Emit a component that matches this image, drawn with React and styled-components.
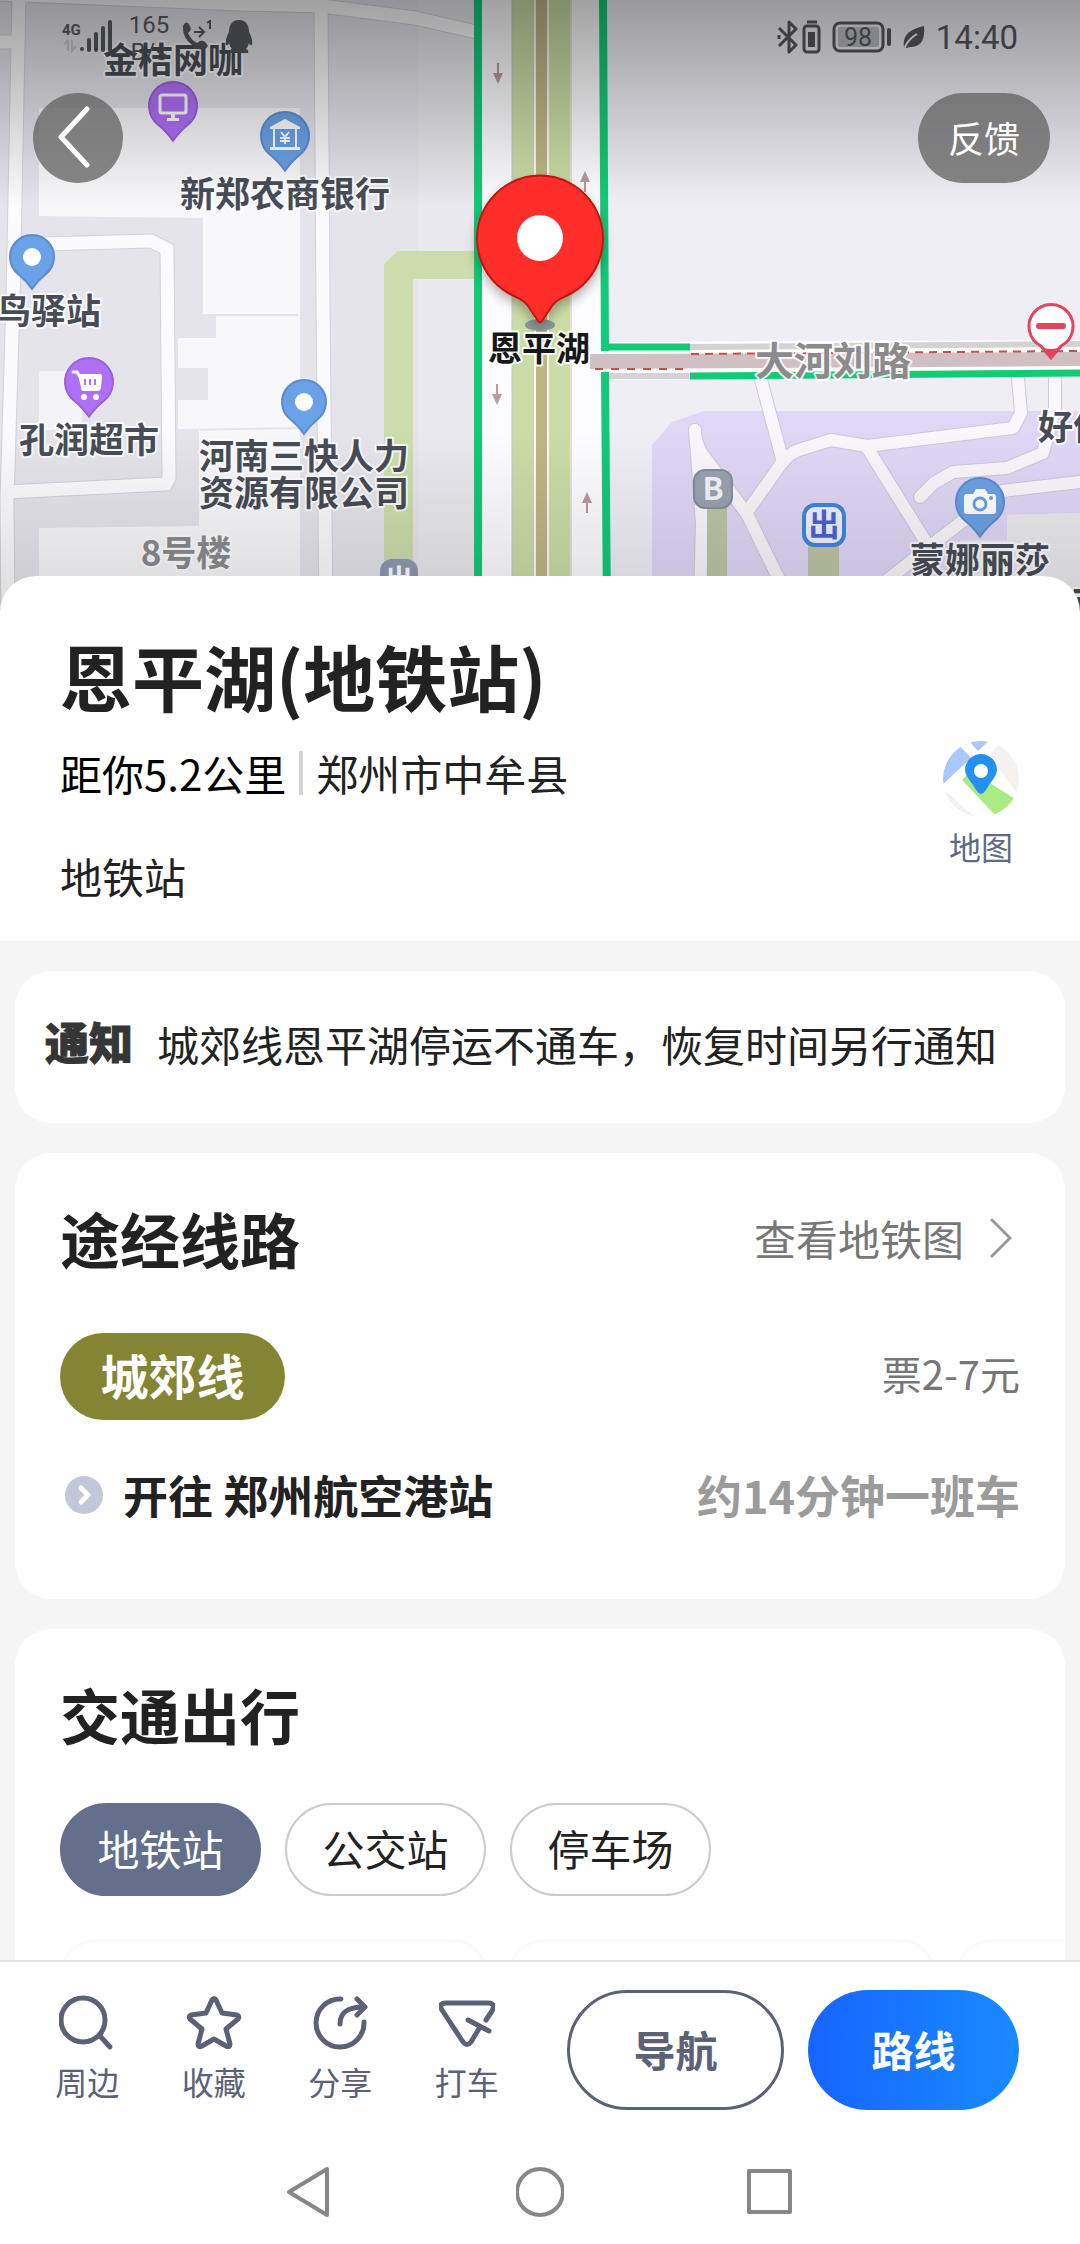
import React, { useState } from 'react';
import styled, { createGlobalStyle, css } from 'styled-components';

const COLOR = {
  TEXT: '#222222',
  SUB: '#777777',
  MUTED: '#9b9b9b',
  SLATE: '#5b6275',
  TAB: '#64708b',
  LINE: '#848533',
  PAGE: '#f5f5f5',
  BORDER: '#cccccc',
};

const FONT_SIZE = {
  SMALL: '32px',
  NORMAL: '40px',
  MEDIUM: '42px',
  LARGE: '45px',
  XLARGE: '60px',
  XXLARGE: '72px',
};

const FONT = "'Noto Sans CJK SC', sans-serif";

const GlobalStyle = createGlobalStyle`
  * { box-sizing: border-box; }
  body { margin: 0; background: #fff; font-family: ${FONT}; color: ${COLOR.TEXT}; }
  button { margin: 0; padding: 0; border: 0; background: none; font-family: inherit; color: inherit; cursor: pointer; }
  h1, h2, p { margin: 0; }
  svg { display: block; }
`;

const Page = styled.div`
  height: 100vh;
  display: flex;
  flex-direction: column;
  overflow: hidden;
`;

const Content = styled.main`
  flex: 1;
  min-height: 0;
  overflow-y: auto;
  scrollbar-width: none;
  background: ${COLOR.PAGE};
`;

/* map */

const MapArea = styled.section`
  position: relative;
  height: 612px;
  background: #e3e2e9;
`;

const MapSvg = styled.svg`
  width: 100%;
  height: 100%;
`;

const MapText = styled.text`
  font-family: ${FONT};
  font-size: ${({ $size }) => $size || 35}px;
  font-weight: 700;
  text-anchor: ${({ $anchor }) => $anchor || 'middle'};
  fill: ${({ $color }) => $color || '#484c56'};
  stroke: rgba(255, 255, 255, 0.85);
  stroke-width: 4px;
  stroke-linejoin: round;
  paint-order: stroke;
`;

const BadgeText = styled.text`
  font-family: ${FONT};
  font-size: ${({ $size }) => $size}px;
  font-weight: 700;
  text-anchor: middle;
  fill: ${({ $color }) => $color};
`;

const MapOverlay = styled.div`
  position: absolute;
  top: 0;
  left: 0;
  right: 0;
`;

const StatusBar = styled.div`
  height: 72px;
  padding: 12px 62px 0 61px;
  display: flex;
  justify-content: space-between;
  align-items: flex-start;
  color: #3d3e42;
`;

const StatusGroup = styled.div`
  display: flex;
  align-items: flex-start;
  gap: ${({ $gap }) => $gap}px;
  padding-top: ${({ $top }) => $top || 0}px;
`;

const Speed = styled.div`
  width: 42px;
  margin: 0 12px 0 14px;
  font-family: Roboto, sans-serif;
  font-size: 24px;
  line-height: 27px;
  text-align: center;
`;

const Clock = styled.time`
  font-family: Roboto, sans-serif;
  font-size: 33px;
  line-height: 36px;
`;

const MapButtons = styled.div`
  padding: 21px 30px 0 33px;
  display: flex;
  justify-content: space-between;
`;

const RoundButton = styled.button`
  width: ${({ $width }) => $width}px;
  height: 90px;
  border-radius: 45px;
  display: flex;
  justify-content: center;
  align-items: center;
  padding-bottom: 3px;
  background: rgba(96, 96, 96, 0.75);
  color: #fff;
  font-size: 36px;
`;

/* place summary */

const Summary = styled.section`
  position: relative;
  margin-top: -36px;
  padding: 49px 61px 35px 60px;
  display: flex;
  justify-content: space-between;
  border-radius: 36px 36px 0 0;
  background: #fff;
`;

const PlaceName = styled.h1`
  font-size: ${FONT_SIZE.XXLARGE};
  line-height: 100px;
  font-weight: 700;
`;

const PlaceMeta = styled.div`
  margin-top: 18px;
  display: flex;
  align-items: center;
  font-size: ${FONT_SIZE.MEDIUM};
  line-height: 60px;

  .distance {
    padding-right: 13px;
    border-right: 4px solid #d4d4d4;
    line-height: 44px;
    color: #000;
  }

  .region {
    padding-left: 13px;
  }
`;

const PlaceType = styled.p`
  margin-top: 43px;
  font-size: ${FONT_SIZE.MEDIUM};
  line-height: 60px;
`;

const MapLink = styled.a`
  width: 76px;
  margin-top: 116px;
  color: #5f6b85;
  font-size: ${FONT_SIZE.SMALL};
  line-height: 48px;
  text-align: center;
  text-decoration: none;
  white-space: nowrap;

  svg {
    margin-bottom: 5px;
  }
`;

/* cards */

const Cards = styled.div`
  padding: 30px 15px;
  display: flex;
  flex-direction: column;
  gap: 30px;
`;

const Card = styled.section`
  border-radius: 36px;
  background: #fff;
  overflow: hidden;
  padding: ${({ $pad }) => $pad};
`;

const Row = styled.div`
  display: flex;
  justify-content: space-between;
  align-items: center;
  margin-top: ${({ $top }) => $top || 0}px;
`;

const Notice = styled.div`
  display: flex;
  align-items: center;
  gap: 24px;
  font-size: ${FONT_SIZE.MEDIUM};
  line-height: 60px;

  strong {
    font-size: 44px;
    line-height: 56px;
    padding-bottom: 6px;
    font-weight: 900;
    color: #363636;
    -webkit-text-stroke: 1px #363636;
  }
`;

const CardTitle = styled.h2`
  font-size: ${FONT_SIZE.XLARGE};
  line-height: 84px;
  font-weight: 700;
`;

const MoreLink = styled.a`
  display: flex;
  align-items: center;
  gap: 26px;
  padding-right: 8px;
  color: ${COLOR.SUB};
  font-size: ${FONT_SIZE.MEDIUM};
  line-height: 60px;
  text-decoration: none;
`;

const LineTag = styled.button`
  width: 225px;
  height: 87px;
  border-radius: 44px;
  padding-bottom: 6px;
  background: ${COLOR.LINE};
  color: #fff;
  font-size: 48px;
  line-height: 80px;
  font-weight: 700;
`;

const Fare = styled.span`
  padding-bottom: 8px;
  color: ${COLOR.SUB};
  font-size: ${FONT_SIZE.NORMAL};
  line-height: 60px;
`;

const Direction = styled.div`
  display: flex;
  align-items: center;
  gap: 20px;
  padding-left: 5px;
  font-size: ${FONT_SIZE.LARGE};
  line-height: 66px;
  font-weight: 700;
`;

const Interval = styled.span`
  color: ${COLOR.MUTED};
  font-size: ${FONT_SIZE.LARGE};
  line-height: 66px;
  font-weight: 700;
`;

const Tabs = styled.div`
  margin-top: 47px;
  display: flex;
  gap: 24px;
`;

const activeTab = css`
  border-color: ${COLOR.TAB};
  background: ${COLOR.TAB};
  color: #fff;
`;

const Tab = styled.button`
  width: 201px;
  height: 93px;
  border: 2px solid ${COLOR.BORDER};
  border-radius: 47px;
  padding-bottom: 4px;
  font-size: ${FONT_SIZE.MEDIUM};
  line-height: 80px;
  ${({ $active }) => $active && activeTab}
`;

const Results = styled.div`
  margin-top: 43px;
  display: flex;
  gap: 20px;
`;

const ResultCard = styled.div`
  flex: 0 0 428px;
  height: 180px;
  border: 3px solid #fafafa;
  border-radius: 36px;
`;

/* bottom */

const Footer = styled.footer`
  border-top: 2px solid #e2e2e2;
  padding: 28px 61px 30px 24px;
  display: flex;
  background: #fff;
`;

const Actions = styled.div`
  flex: 1;
  margin-right: 37px;
  display: grid;
  grid-template-columns: repeat(4, 1fr);
`;

const Action = styled.button`
  display: flex;
  flex-direction: column;
  align-items: center;
  gap: 8px;
  padding-top: 5px;
  color: ${COLOR.SLATE};
  font-size: ${FONT_SIZE.SMALL};
  line-height: 44px;
`;

const MainButton = styled.button`
  width: ${({ $primary }) => ($primary ? 211 : 217)}px;
  height: 120px;
  margin-left: ${({ $primary }) => ($primary ? 24 : 0)}px;
  border: ${({ $primary }) => ($primary ? '0' : `3px solid ${COLOR.SLATE}`)};
  border-radius: 60px;
  padding-bottom: 4px;
  background: ${({ $primary }) =>
    $primary ? 'linear-gradient(90deg, #1764ff, #188bff)' : '#fff'};
  color: ${({ $primary }) => ($primary ? '#fff' : COLOR.SLATE)};
  font-size: ${FONT_SIZE.MEDIUM};
  font-weight: 700;
`;

const SystemNav = styled.nav`
  height: 104px;
  display: flex;
  justify-content: center;
  align-items: center;
  gap: 182px;
  background: #fff;
`;

const PIN_COLOR = {
  purple: ['#b070f5', '#9b60dc'],
  blue: ['#6ba1e6', '#5b8dcd'],
};

const Pin = ({ x, y, r = 24, color, children }) => (
  <g transform={`translate(${x} ${y})`}>
    <path
      d={`M${-r * 0.62} ${r * 0.78} A${r} ${r} 0 1 1 ${r * 0.62} ${r * 0.78} Q${r * 0.28} ${r * 1.05} 0 ${r * 1.45} Q${-r * 0.28} ${r * 1.05} ${-r * 0.62} ${r * 0.78} Z`}
      fill={PIN_COLOR[color][0]}
      stroke={PIN_COLOR[color][1]}
      strokeWidth='2'
    />
    {children || <circle r='9' fill='#fff' />}
  </g>
);

const RoadArrow = ({ x, y, up }) => (
  <g transform={`translate(${x} ${y}) ${up ? 'rotate(180)' : ''}`} fill='#b99a9d'>
    <path d='M-1 -10 H1 V0 H5 L0 11 L-5 0 H-1 Z' />
  </g>
);

const SIDE_ROADS = [
  'M760 376 L783 462',
  'M747 512 L781 464 Q790 452 802 449 L831 440 L867 446 L1013 428 L1021 413 L1018 378',
  'M1055 378 V408 L1043 453 L1007 468 L953 472 L934 483 L920 497',
  'M868 449 L929 547',
  'M885 582 L929 547 L1002 491 L1080 482',
  'M695 430 L697 455 L702 523 L700 600',
  'M697 447 L747 514 L790 602',
  'M696 440 L704 462 L700 490',
];

const LOCAL_ROADS = [
  'M19 -5 L13 300 L7 500 L8 620',
  'M-5 42 H18',
  'M0 -6 L240 4 L322 6 L415 18 L485 34',
  'M321 0 L323 300 L326 620',
  'M40 244 L151 241 L167 249 L169 478 L166 484 L6 492',
];

const CityMap = () => (
  <MapSvg viewBox='0 0 1080 612' preserveAspectRatio='xMidYMin slice' role='img' aria-label='恩平湖地图'>
    <defs>
      <linearGradient id='shadeTop' x1='0' x2='0' y1='0' y2='1'>
        <stop offset='0' stopColor='#000' stopOpacity='0.36' />
        <stop offset='0.5' stopColor='#000' stopOpacity='0.18' />
        <stop offset='1' stopColor='#000' stopOpacity='0' />
      </linearGradient>
      <linearGradient id='shadeBottom' x1='0' x2='0' y1='0' y2='1'>
        <stop offset='0' stopColor='#000' stopOpacity='0' />
        <stop offset='1' stopColor='#000' stopOpacity='0.12' />
      </linearGradient>
      <filter id='pinShadow' x='-30%' y='-30%' width='160%' height='160%'>
        <feDropShadow dx='0' dy='6' stdDeviation='6' floodColor='#000' floodOpacity='0.3' />
      </filter>
    </defs>

    <rect width='1080' height='612' fill='#e5e4eb' />
    <rect x='418' width='60' height='612' fill='#e9e8ee' />
    <rect x='606' width='474' height='612' fill='#efeef5' />
    <path
      d='M39 108 H300 V576 H305 V612 H39 V528 L199 526 V430 H178 V400 H208 V368 H178 V338 H216 V315 H203 V218 L39 216 Z'
      fill='#f8f8fb'
    />
    <path d='M203 315 H298 M178 430 L300 428' stroke='#e6e4ea' strokeWidth='2' />
    <path d='M39 371 H82 V430 H39 Z' fill='#f4f3f7' />
    <path d='M384 612 V264 L398 251 H476 V279 H413 V612 Z' fill='#ccddab' />

    {LOCAL_ROADS.map((d) => (
      <path key={d} d={d} fill='none' stroke='#d2d2d9' strokeWidth='15' />
    ))}
    {LOCAL_ROADS.map((d) => (
      <path key={d} d={d} fill='none' stroke='#fbfafc' strokeWidth='13' />
    ))}

    <path d='M652 612 V445 L672 422 L704 411 H1080 V513 L1007 515 V612 Z' fill='#e0d7f6' />
    <path d='M1007 515 L1080 513 V612 H960 V540 H1007 Z' fill='#ebeaef' />
    {SIDE_ROADS.map((d) => (
      <path key={d} d={d} fill='none' stroke='#cdc8dc' strokeWidth='14' strokeLinecap='round' strokeLinejoin='round' />
    ))}
    {SIDE_ROADS.map((d) => (
      <path key={d} d={d} fill='none' stroke='#f9f7fb' strokeWidth='12' strokeLinecap='round' strokeLinejoin='round' />
    ))}
    <rect x='707' y='505' width='20' height='107' fill='#bdc5a6' />
    <rect x='808' y='545' width='31' height='67' fill='#bdc5a6' />

    {/* 中央大道 */}
    <rect x='480' width='124' height='612' fill='#fdfcfe' />
    <rect x='512' width='58' height='612' fill='#cbdca6' />
    <rect x='534' width='15' height='612' fill='#fbfaf2' />
    <rect x='536' width='11' height='612' fill='#bcb687' />
    <path d='M512 0 V612 M571 0 V612' stroke='#c9c6cc' strokeWidth='1' />
    <path d='M478 0 V612' stroke='#14c978' strokeWidth='8' />
    <RoadArrow x={498} y={73} />
    <RoadArrow x={497} y={394} />
    <RoadArrow x={585} y={182} up />
    <RoadArrow x={587} y={503} up />

    {/* 大河刘路 */}
    <path d='M606 342 L1080 340 V374 L606 380 Z' fill='#fff' />
    <path d='M690 347 L1080 344' stroke='#d3d3d5' strokeWidth='6' />
    <path d='M608 376 H690' stroke='#d3d3d5' strokeWidth='6' />
    <path d='M590 354 L1080 352 V366 L590 369 Z' fill='#d0c0c4' />
    <path d='M691 354 L1080 351' stroke='#c8504a' strokeWidth='2' strokeDasharray='8 6' />
    <path d='M595 369 H690' stroke='#c8504a' strokeWidth='2' strokeDasharray='8 8' />
    <path d='M608 347 H690 M690 376 L1080 373' stroke='#14c978' strokeWidth='7' />
    <path d='M603 0 L605 351 M605 372 L607 612' stroke='#14c978' strokeWidth='8' />

    <rect x='380' y='559' width='38' height='40' rx='12' fill='#8f99b0' />
    <BadgeText x='399' y='590' $size={28} $color='#fff'>出</BadgeText>
    <rect x='694' y='470' width='38' height='38' rx='11' fill='#9aa2b2' stroke='#858e9f' strokeWidth='2' />
    <BadgeText x='713' y='500' $size={31} $color='#f4f4f7'>B</BadgeText>
    <rect x='804' y='505' width='40' height='40' rx='11' fill='#f0effc' stroke='#4285dd' strokeWidth='4' />
    <BadgeText x='824' y='536' $size={31} $color='#4a62d5'>出</BadgeText>

    <Pin x={173} y={106} color='purple'>
      <rect x='-13' y='-11' width='26' height='18' rx='2' fill='none' stroke='#fff' strokeWidth='3' />
      <path d='M-2 7 H2 V12 H6 V15 H-6 V12 H-2 Z' fill='#fff' />
    </Pin>
    <Pin x={285} y={136} color='blue'>
      <path d='M-15 -9 L0 -17 L15 -9 V-7 H-15 Z M-15 11 H15 V14 H-15 Z' fill='#fff' />
      <path d='M-11 -8 V12 M11 -8 V12 M-4 -4 L0 1 L4 -4 M0 1 V8 M-5 2 H5 M-5 5 H5' fill='none' stroke='#fff' strokeWidth='2' />
    </Pin>
    <Pin x={32} y={257} r={22} color='blue' />
    <Pin x={89} y={382} color='purple'>
      <path d='M-16 -10 H-12 L-9 -5' fill='none' stroke='#fff' strokeWidth='3' strokeLinecap='round' />
      <path d='M-11 -8 H11 Q13 -8 13 -5 L12 6 Q11 9 9 9 H-5 Q-8 9 -8 6 Z' fill='#fff' />
      <path d='M-4 -3 V3 M1 -3 V3 M6 -3 V3' stroke='#b070f5' strokeWidth='2' />
      <circle cx='-5' cy='15' r='3' fill='#fff' />
      <circle cx='7' cy='15' r='3' fill='#fff' />
    </Pin>
    <Pin x={304} y={402} r={22} color='blue' />
    <Pin x={980} y={502} color='blue'>
      <path d='M-13 -8 H-7 L-4 -13 H5 L8 -8 H13 Q16 -8 16 -5 V9 Q16 12 13 12 H-13 Q-16 12 -16 9 V-5 Q-16 -8 -13 -8 Z' fill='#fff' />
      <circle cx='0' cy='2' r='6' fill='none' stroke='#6ba1e6' strokeWidth='3' />
      <circle cx='11' cy='-4' r='2' fill='#6ba1e6' />
    </Pin>
    <path d='M1041 346 A22 22 0 1 1 1061 346 L1051 358 Z' fill='#fff' stroke='#e0475f' strokeWidth='3' />
    <path d='M1044 348 Q1051 350 1058 348 L1051 359 Z' fill='#e0475f' />
    <path d='M1039 326 H1063' stroke='#e0475f' strokeWidth='6' strokeLinecap='round' />

    <MapText x='173' y='73'>金桔网咖</MapText>
    <MapText x='285' y='207'>新郑农商银行</MapText>
    <MapText x='101' y='324' $anchor='end'>鸟驿站</MapText>
    <MapText x='89' y='453'>孔润超市</MapText>
    <MapText x='304' y='469'>河南三快人力</MapText>
    <MapText x='304' y='506'>资源有限公司</MapText>
    <MapText x='186' y='566' $color='#8a8b8e'>8号楼</MapText>
    <MapText x='833' y='375' $size={39} $color='#8b8a8c'>大河刘路</MapText>
    <MapText x='1038' y='440' $anchor='start'>好佳</MapText>
    <MapText x='980' y='573'>蒙娜丽莎</MapText>
    <MapText x='1072' y='617' $anchor='start'>可</MapText>

    <rect width='1080' height='205' fill='url(#shadeTop)' />
    <rect y='430' width='1080' height='182' fill='url(#shadeBottom)' />

    <ellipse cx='540' cy='325' rx='15' ry='6' fill='#8b9a97' />
    <g filter='url(#pinShadow)'>
      <path
        d='M514 296 A63 63 0 1 1 566 296 Q554 301 550 309 L542 321 Q540 324 538 321 L530 309 Q526 301 514 296 Z'
        fill='#ff2e2c'
        stroke='#c2160f'
        strokeWidth='2'
      />
    </g>
    <circle cx='540' cy='238' r='23' fill='#fff' />
    <MapText x='539' y='361' $size={34} $color='#17181a'>恩平湖</MapText>
  </MapSvg>
);

const SignalIcon = () => (
  <svg width='53' height='34' viewBox='0 0 53 34' fill='currentColor' aria-hidden='true'>
    <text x='1' y='15' fontFamily='Roboto' fontSize='15' fontWeight='700'>4G</text>
    <path d='M7 20 V31 M7 20 L3 25 M11 20 V31 L15 26' fill='none' stroke='#8f8f94' strokeWidth='2' />
    <circle cx='21' cy='29' r='2' />
    <path d='M28 20 V30 M35 14 V30 M42 8 V30 M49 2 V30' stroke='currentColor' strokeWidth='4' strokeLinecap='round' />
  </svg>
);

const CallIcon = () => (
  <svg width='31' height='34' viewBox='0 0 31 34' aria-hidden='true'>
    <path
      d='M1 6 Q3 1 6 3 Q10 8 8 11 L6 13 Q9 20 15 23 L18 21 Q23 20 26 26 Q22 32 15 28 Q0 20 1 6 Z'
      fill='currentColor'
    />
    <path d='M12 12 H21 M17 7 L22 12 L17 17 M25 3 L28 1 V9' fill='none' stroke='currentColor' strokeWidth='2' />
  </svg>
);

const PenguinIcon = () => (
  <svg width='28' height='34' viewBox='0 0 28 34' fill='currentColor' aria-hidden='true'>
    <path d='M14 0 C21 0 24 5 24 12 Q28 19 27 25 Q25 26 24 23 Q23 27 21 29 Q24 30 23 33 H5 Q4 30 7 29 Q5 27 4 23 Q3 26 1 25 Q0 19 4 12 C4 5 7 0 14 0 Z' />
  </svg>
);

const BluetoothIcon = () => (
  <svg width='44' height='34' viewBox='0 0 44 34' fill='none' stroke='currentColor' strokeWidth='3' aria-hidden='true'>
    <path d='M2 8 L19 25 L12 32 V2 L19 9 L2 26' strokeLinejoin='round' />
    <path d='M2 15 V19' />
    <rect x='27' y='6' width='15' height='26' rx='3' />
    <path d='M30 2 H40' />
    <rect x='31' y='12' width='7' height='15' fill='currentColor' stroke='none' />
  </svg>
);

const BatteryIcon = () => (
  <svg width='60' height='34' viewBox='0 0 60 34' aria-hidden='true'>
    <rect x='2' y='3' width='49' height='28' rx='6' fill='none' stroke='currentColor' strokeWidth='3' />
    <rect x='6' y='7' width='41' height='20' rx='2' fill='#85868b' />
    <path d='M57 10 V24' stroke='currentColor' strokeWidth='4' strokeLinecap='round' />
    <text x='26' y='26' fontFamily='Roboto' fontSize='25' fill='currentColor' textAnchor='middle'>98</text>
  </svg>
);

const LeafIcon = () => (
  <svg width='22' height='34' viewBox='0 0 22 34' aria-hidden='true'>
    <path d='M21 6 Q23 27 7 27 L3 28 L1 27 Q-2 11 21 6 Z' fill='currentColor' />
    <path d='M1 29 Q5 19 14 14' fill='none' stroke='#b0afb4' strokeWidth='2' />
  </svg>
);

const BackIcon = () => (
  <svg width='40' height='64' viewBox='0 0 40 64' fill='none' aria-hidden='true'>
    <path d='M29 4 L3 32 L29 60' stroke='#fff' strokeWidth='5' strokeLinecap='round' strokeLinejoin='round' />
  </svg>
);

const MapIcon = () => (
  <svg width='76' height='76' viewBox='0 0 76 76' aria-hidden='true'>
    <defs>
      <clipPath id='mapRound'>
        <circle cx='38' cy='38' r='38' />
      </clipPath>
    </defs>
    <g clipPath='url(#mapRound)'>
      <path d='M-4 47 L28 17 L14 2 L-6 10 Z M22 -4 H50 L35 10 Z' fill='#aac8fb' />
      <path d='M46 14 L62 -4 L84 20 V66 Z M2 50 L48 90 H-6 Z' fill='#f4f1ee' />
      <path d='M19 39 L28 30 L72 58 L54 76 Z' fill='#a9eb80' />
    </g>
    <path d='M38 53 Q35 53 30 44 Q22 34 22 29 A16 16 0 0 1 54 29 Q54 34 46 44 Q41 53 38 53 Z' fill='#2491f2' />
    <circle cx='38' cy='30' r='7' fill='#fff' />
  </svg>
);

const ChevronIcon = () => (
  <svg width='22' height='40' viewBox='0 0 22 40' fill='none' stroke='#999' strokeWidth='3' aria-hidden='true'>
    <path d='M2 2 L20 20 L2 38' strokeLinecap='round' />
  </svg>
);

const DirectionIcon = () => (
  <svg width='38' height='38' viewBox='0 0 38 38' aria-hidden='true'>
    <circle cx='19' cy='19' r='19' fill='#c3c8d8' />
    <path d='M16 12 L23 19 L16 26' fill='none' stroke='#fff' strokeWidth='5' strokeLinecap='round' strokeLinejoin='round' />
  </svg>
);

const ActionIcon = ({ children }) => (
  <svg
    width='56'
    height='56'
    viewBox='0 0 56 56'
    fill='none'
    stroke='currentColor'
    strokeWidth='5'
    strokeLinecap='round'
    strokeLinejoin='round'
    aria-hidden='true'
  >
    {children}
  </svg>
);

const ACTIONS = [
  {
    name: '周边',
    icon: (
      <>
        <circle cx='24' cy='25' r='22' />
        <path d='M41 41 L51 52' />
      </>
    ),
  },
  {
    name: '收藏',
    icon: (
      <path d='M26 5 Q28 2 30 5 L36 18 L51 20 Q54 21 52 24 L40 34 L44 49 Q44 53 40 51 L28 44 L16 51 Q12 53 12 49 L16 34 L4 24 Q2 21 5 20 L20 18 Z' />
    ),
  },
  {
    name: '分享',
    icon: (
      <>
        <path d='M29 4 A24 24 0 1 0 52 27' />
        <path d='M28 29 C28 17 36 12 52 12 M45 4 L53 12 L45 20' />
      </>
    ),
  },
  {
    name: '打车',
    icon: (
      <>
        <path d='M47 25 L53 16 Q57 8 49 8 H7 Q-1 8 3 15 L24 47 Q28 52 32 47 L41 32' />
        <path d='M29 25 L50 36' />
      </>
    ),
  },
];

const TABS = ['地铁站', '公交站', '停车场'];

const App = () => {
  const [tab, setTab] = useState('地铁站');

  return (
    <Page>
      <GlobalStyle />
      <Content>
        <MapArea>
          <CityMap />
          <MapOverlay>
            <StatusBar>
              <StatusGroup $gap={0}>
                <StatusGroup $top={8}>
                  <SignalIcon />
                </StatusGroup>
                <Speed>165 B/s</Speed>
                <StatusGroup $gap={12} $top={8}>
                  <CallIcon />
                  <PenguinIcon />
                </StatusGroup>
              </StatusGroup>
              <StatusGroup $gap={11} $top={8}>
                <BluetoothIcon />
                <BatteryIcon />
                <LeafIcon />
                <Clock>14:40</Clock>
              </StatusGroup>
            </StatusBar>
            <MapButtons>
              <RoundButton $width={90} aria-label='返回'>
                <BackIcon />
              </RoundButton>
              <RoundButton $width={132}>反馈</RoundButton>
            </MapButtons>
          </MapOverlay>
        </MapArea>

        <Summary>
          <div>
            <PlaceName>恩平湖(地铁站)</PlaceName>
            <PlaceMeta>
              <span className='distance'>距你5.2公里</span>
              <span className='region'>郑州市中牟县</span>
            </PlaceMeta>
            <PlaceType>地铁站</PlaceType>
          </div>
          <MapLink href='#map'>
            <MapIcon />
            地图
          </MapLink>
        </Summary>

        <Cards>
          <Card $pad='42px 30px 48px'>
            <Notice>
              <strong>通知</strong>
              <p>城郊线恩平湖停运不通车，恢复时间另行通知</p>
            </Notice>
          </Card>

          <Card $pad='43px 45px 71px'>
            <Row>
              <CardTitle>途经线路</CardTitle>
              <MoreLink href='#subway'>
                查看地铁图
                <ChevronIcon />
              </MoreLink>
            </Row>
            <Row $top={53}>
              <LineTag>城郊线</LineTag>
              <Fare>票2-7元</Fare>
            </Row>
            <Row $top={42}>
              <Direction>
                <DirectionIcon />
                开往 郑州航空港站
              </Direction>
              <Interval>约14分钟一班车</Interval>
            </Row>
          </Card>

          <Card $pad='43px 45px 0'>
            <CardTitle>交通出行</CardTitle>
            <Tabs>
              {TABS.map((name) => (
                <Tab key={name} $active={name === tab} onClick={() => setTab(name)}>
                  {name}
                </Tab>
              ))}
            </Tabs>
            <Results>
              <ResultCard />
              <ResultCard />
              <ResultCard />
            </Results>
          </Card>
        </Cards>
      </Content>

      <Footer>
        <Actions>
          {ACTIONS.map(({ name, icon }) => (
            <Action key={name}>
              <ActionIcon>{icon}</ActionIcon>
              {name}
            </Action>
          ))}
        </Actions>
        <MainButton>导航</MainButton>
        <MainButton $primary>路线</MainButton>
      </Footer>

      <SystemNav>
        <button aria-label='后退'>
          <svg width='48' height='52' viewBox='0 0 48 52' fill='none' stroke='#878787' strokeWidth='4' strokeLinejoin='round'>
            <path d='M3 26 L41 3 V49 Z' />
          </svg>
        </button>
        <button aria-label='主页'>
          <svg width='48' height='52' viewBox='0 0 48 52' fill='none' stroke='#878787' strokeWidth='4'>
            <circle cx='24' cy='26' r='23' />
          </svg>
        </button>
        <button aria-label='最近任务'>
          <svg width='48' height='52' viewBox='0 0 48 52' fill='none' stroke='#878787' strokeWidth='4' strokeLinejoin='round'>
            <rect x='3' y='5' width='41' height='41' />
          </svg>
        </button>
      </SystemNav>
    </Page>
  );
};

export default App;
